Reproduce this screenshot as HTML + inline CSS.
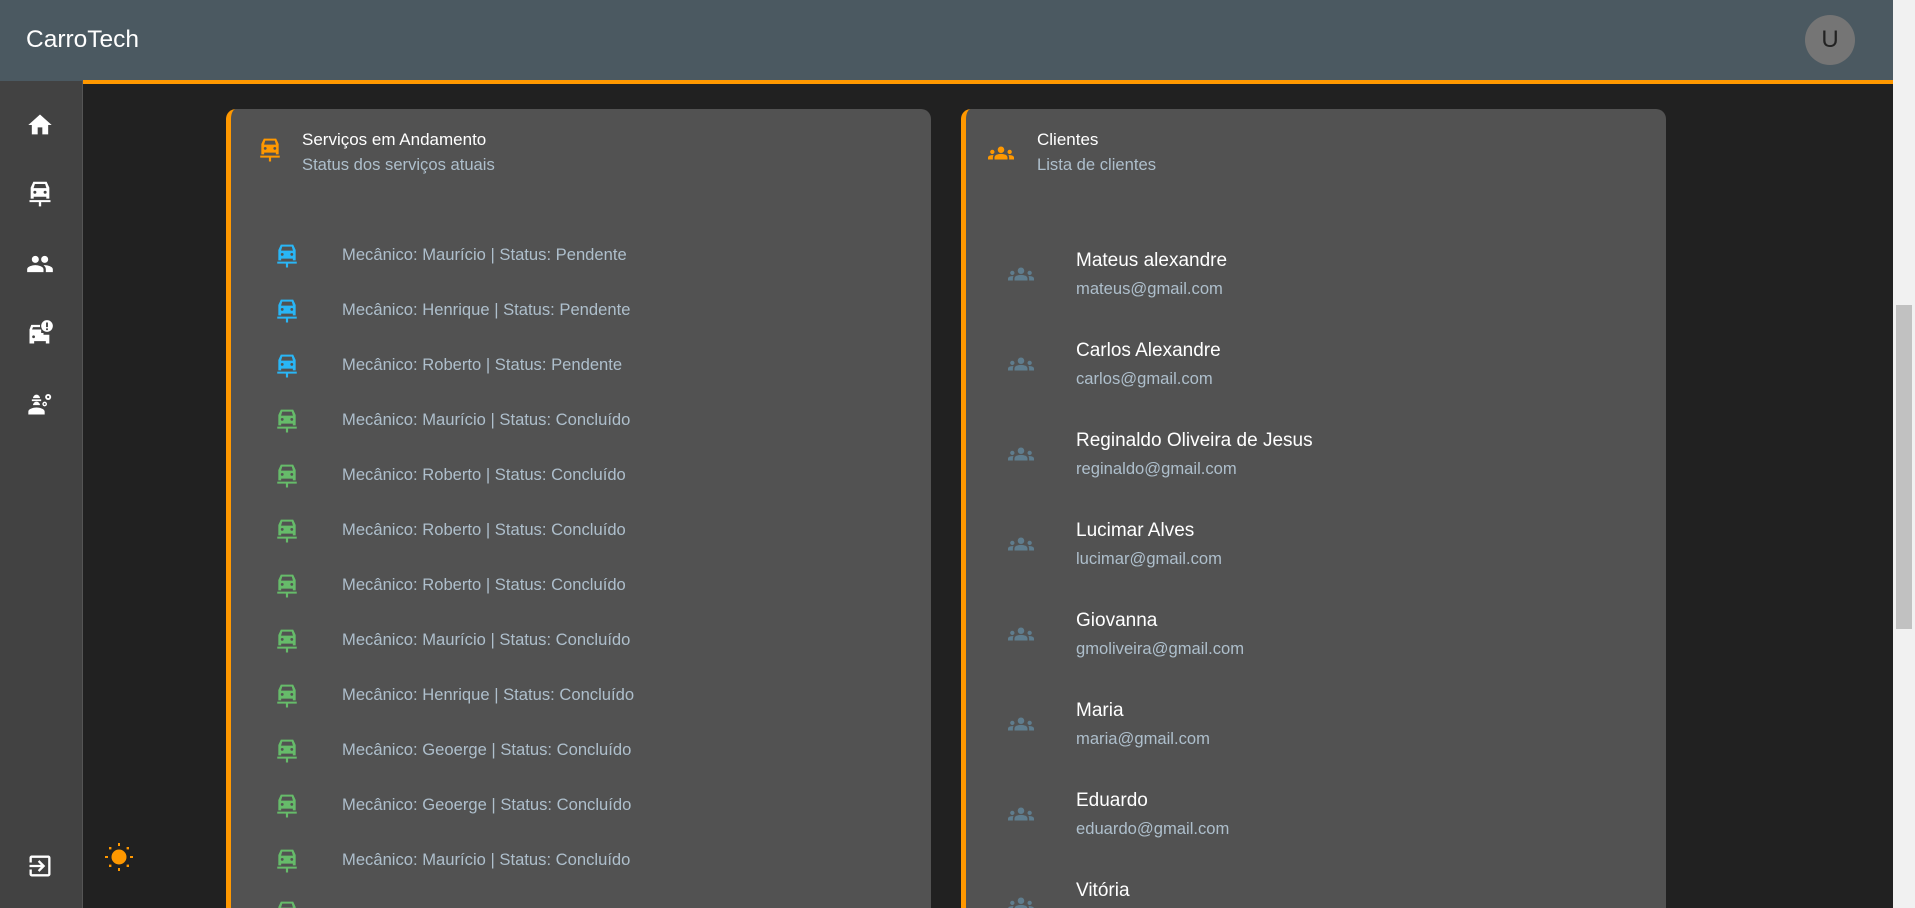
<!DOCTYPE html>
<html><head><meta charset="utf-8"><style>
*{margin:0;padding:0;box-sizing:border-box}
html,body{width:1915px;height:908px;overflow:hidden}
body{background:#212121;font-family:"Liberation Sans",sans-serif;position:relative}
.hdr{position:absolute;left:0;top:0;width:1893px;height:81px;background:#4b5961}
.hdr .t{position:absolute;left:26px;top:26px;font-size:24.5px;color:#fff}
.av{position:absolute;left:1805px;top:15px;width:50px;height:50px;border-radius:50%;background:#757575;color:#222;font-size:24px;text-align:center;line-height:50px}
.side{position:absolute;left:0;top:81px;width:83px;height:827px;background:#424242;border-right:1px solid #555}
.side svg{position:absolute;left:26px;width:28px;height:28px;fill:#fff}
.ol{position:absolute;left:83px;top:80px;width:1810px;height:4px;background:#ff9800}
.sb{position:absolute;left:1893px;top:0;width:22px;height:908px;background:#f1f1f1}
.sb div{position:absolute;left:3px;top:305px;width:16px;height:324px;background:#c1c1c1}
.card{position:absolute;top:109px;width:705px;height:799px;background:#525252;border-radius:10px 10px 0 0;border-left:5px solid #ff9800}
.ic{position:absolute;width:26px;height:26px}
.ct{position:absolute;font-size:17px;color:#fff}
.cs{position:absolute;font-size:16.6px;color:#aebfcc}
.it{position:absolute;font-size:16.6px;color:#aebfcc}
.nm{position:absolute;font-size:19px;color:#fff}
.em{position:absolute;font-size:16.6px;color:#aebfcc}
</style></head><body>
<svg width="0" height="0" style="position:absolute"><defs>
<symbol id="car" viewBox="0 0 24 24"><path d="M6.3 1.5h11.4L20 6.5V16h-2.6v-1.6H6.6V16H4V6.5zM7.6 3.4L6.5 7h11l-1.1-3.6zM7.6 9.2a1.3 1.3 0 100 2.6 1.3 1.3 0 000-2.6zm8.8 0a1.3 1.3 0 100 2.6 1.3 1.3 0 000-2.6zM3 17.2h18v1.8h-8v3.6h-2V19H3z"/></symbol>
<symbol id="grp" viewBox="0 0 24 24"><path d="M12 12.75c1.63 0 3.07.39 4.24.9 1.08.48 1.76 1.56 1.76 2.73V18H6v-1.61c0-1.18.68-2.26 1.76-2.73 1.17-.52 2.61-.91 4.24-.91zM4 13c1.1 0 2-.9 2-2s-.9-2-2-2-2 .9-2 2 .9 2 2 2zm1.13 1.1c-.37-.06-.74-.1-1.13-.1-.99 0-1.93.21-2.78.58C.48 14.9 0 15.62 0 16.43V18h4.5v-1.61c0-.83.23-1.61.63-2.29zM20 13c1.1 0 2-.9 2-2s-.9-2-2-2-2 .9-2 2 .9 2 2 2zm4 3.43c0-.81-.48-1.530-1.22-1.85-.85-.37-1.79-.58-2.78-.58-.39 0-.76.04-1.13.1.4.68.63 1.46.63 2.29V18H24v-1.57zM12 6c1.66 0 3 1.34 3 3s-1.34 3-3 3-3-1.34-3-3 1.34-3 3-3z"/></symbol>
</defs></svg>
<div class="hdr"><div class="t">CarroTech</div><div class="av">U</div></div>
<div class="side">
<svg style="top:30px" viewBox="0 0 24 24"><path d="M10 20v-6h4v6h5v-8h3L12 3 2 12h3v8z"/></svg>
<svg style="top:99px" viewBox="0 0 24 24"><use href="#car"/></svg>
<svg style="top:169px" viewBox="0 0 24 24"><path d="M16 11c1.66 0 2.99-1.34 2.99-3S17.66 5 16 5c-1.66 0-3 1.34-3 3s1.34 3 3 3zm-8 0c1.66 0 2.99-1.34 2.99-3S9.66 5 8 5C6.34 5 5 6.34 5 8s1.34 3 3 3zm0 2c-2.33 0-7 1.17-7 3.5V19h14v-2.5c0-2.33-4.67-3.5-7-3.5zm8 0c-.29 0-.62.02-.97.05 1.16.84 1.97 1.97 1.97 3.45V19h6v-2.5c0-2.33-4.670-3.5-7-3.5z"/></svg>
<svg style="top:238px" viewBox="0 0 24 24"><path d="M3 9l1.5-4H12v2H6l-.8 2H13v3H3zM3 12h12v1.5h5V21h-3v-2H7v2H3zM6.5 14a1.2 1.2 0 100 2.4 1.2 1.2 0 000-2.4z"/><circle cx="18" cy="6" r="5"/><path d="M17.2 3h1.6v4h-1.6zM17.2 8h1.6v1.5h-1.6z" fill="#424242"/></svg>
<svg style="top:309px" viewBox="0 0 24 24"><path d="M5 8h8v1.5H5zM6 7a3 3 0 016 0zM9 10a3 3 0 013 3H6a3 3 0 013-3zM9 15c-3 0-7 1.3-7 3.5V21h14v-2.5C16 16.3 12 15 9 15z"/><circle cx="19" cy="6" r="2.6"/><circle cx="19" cy="6" r="1" fill="#424242"/><circle cx="16" cy="12" r="2"/><circle cx="16" cy="12" r=".8" fill="#424242"/></svg>
<svg style="top:771px" viewBox="0 0 24 24"><path d="M10.09 15.59L11.5 17l5-5-5-5-1.41 1.41L12.67 11H3v2h9.67l-2.58 2.59zM19 3H5c-1.11 0-2 .9-2 2v4h2V5h14v14H5v-4H3v4c0 1.1.89 2 2 2h14c1.1 0 2-.9 2-2V5c0-1.1-.9-2-2-2z"/></svg>
</div>
<div class="ol"></div>
<svg style="position:absolute;left:105px;top:843px" width="28" height="28" viewBox="0 0 28 28" fill="#ff9800"><circle cx="14" cy="14" r="7.5"/><rect x="13" y="0" width="2" height="3"/><rect x="13" y="25" width="2" height="3"/><rect x="0" y="13" width="3" height="2"/><rect x="25" y="13" width="3" height="2"/><rect x="4" y="4" width="2.4" height="2.4"/><rect x="21.6" y="4" width="2.4" height="2.4"/><rect x="4" y="21.6" width="2.4" height="2.4"/><rect x="21.6" y="21.6" width="2.4" height="2.4"/></svg>

<div class="card" style="left:226px">
<svg class="ic" style="left:26px;top:28px;fill:#ff9800" viewBox="0 0 24 24"><use href="#car"/></svg>
<div class="ct" style="left:71px;top:21px">Serviços em Andamento</div>
<div class="cs" style="left:71px;top:46px">Status dos serviços atuais</div>
</div>
<div class="card" style="left:961px">
<svg class="ic" style="left:22px;top:31px;fill:#ff9800" viewBox="0 0 24 24"><use href="#grp"/></svg>
<div class="ct" style="left:71px;top:21px">Clientes</div>
<div class="cs" style="left:71px;top:46px">Lista de clientes</div>
</div>

<div>
<svg class="ic" style="left:274px;top:243px;fill:#29b6f6" viewBox="0 0 24 24"><use href="#car"/></svg><div class="it" style="left:342px;top:245px">Mecânico: Maurício | Status: Pendente</div>
<svg class="ic" style="left:274px;top:298px;fill:#29b6f6" viewBox="0 0 24 24"><use href="#car"/></svg><div class="it" style="left:342px;top:300px">Mecânico: Henrique | Status: Pendente</div>
<svg class="ic" style="left:274px;top:353px;fill:#29b6f6" viewBox="0 0 24 24"><use href="#car"/></svg><div class="it" style="left:342px;top:355px">Mecânico: Roberto | Status: Pendente</div>
<svg class="ic" style="left:274px;top:408px;fill:#66bb6a" viewBox="0 0 24 24"><use href="#car"/></svg><div class="it" style="left:342px;top:410px">Mecânico: Maurício | Status: Concluído</div>
<svg class="ic" style="left:274px;top:463px;fill:#66bb6a" viewBox="0 0 24 24"><use href="#car"/></svg><div class="it" style="left:342px;top:465px">Mecânico: Roberto | Status: Concluído</div>
<svg class="ic" style="left:274px;top:518px;fill:#66bb6a" viewBox="0 0 24 24"><use href="#car"/></svg><div class="it" style="left:342px;top:520px">Mecânico: Roberto | Status: Concluído</div>
<svg class="ic" style="left:274px;top:573px;fill:#66bb6a" viewBox="0 0 24 24"><use href="#car"/></svg><div class="it" style="left:342px;top:575px">Mecânico: Roberto | Status: Concluído</div>
<svg class="ic" style="left:274px;top:628px;fill:#66bb6a" viewBox="0 0 24 24"><use href="#car"/></svg><div class="it" style="left:342px;top:630px">Mecânico: Maurício | Status: Concluído</div>
<svg class="ic" style="left:274px;top:683px;fill:#66bb6a" viewBox="0 0 24 24"><use href="#car"/></svg><div class="it" style="left:342px;top:685px">Mecânico: Henrique | Status: Concluído</div>
<svg class="ic" style="left:274px;top:738px;fill:#66bb6a" viewBox="0 0 24 24"><use href="#car"/></svg><div class="it" style="left:342px;top:740px">Mecânico: Geoerge | Status: Concluído</div>
<svg class="ic" style="left:274px;top:793px;fill:#66bb6a" viewBox="0 0 24 24"><use href="#car"/></svg><div class="it" style="left:342px;top:795px">Mecânico: Geoerge | Status: Concluído</div>
<svg class="ic" style="left:274px;top:848px;fill:#66bb6a" viewBox="0 0 24 24"><use href="#car"/></svg><div class="it" style="left:342px;top:850px">Mecânico: Maurício | Status: Concluído</div>
<svg class="ic" style="left:274px;top:900px;fill:#66bb6a" viewBox="0 0 24 24"><use href="#car"/></svg>
</div>
<div>
<svg class="ic" style="left:1008px;top:261px;fill:#5f7d8e" viewBox="0 0 24 24"><use href="#grp"/></svg><div class="nm" style="left:1076px;top:250px">Mateus alexandre</div><div class="em" style="left:1076px;top:279px">mateus@gmail.com</div>
<svg class="ic" style="left:1008px;top:351px;fill:#5f7d8e" viewBox="0 0 24 24"><use href="#grp"/></svg><div class="nm" style="left:1076px;top:340px">Carlos Alexandre</div><div class="em" style="left:1076px;top:369px">carlos@gmail.com</div>
<svg class="ic" style="left:1008px;top:441px;fill:#5f7d8e" viewBox="0 0 24 24"><use href="#grp"/></svg><div class="nm" style="left:1076px;top:430px">Reginaldo Oliveira de Jesus</div><div class="em" style="left:1076px;top:459px">reginaldo@gmail.com</div>
<svg class="ic" style="left:1008px;top:531px;fill:#5f7d8e" viewBox="0 0 24 24"><use href="#grp"/></svg><div class="nm" style="left:1076px;top:520px">Lucimar Alves</div><div class="em" style="left:1076px;top:549px">lucimar@gmail.com</div>
<svg class="ic" style="left:1008px;top:621px;fill:#5f7d8e" viewBox="0 0 24 24"><use href="#grp"/></svg><div class="nm" style="left:1076px;top:610px">Giovanna</div><div class="em" style="left:1076px;top:639px">gmoliveira@gmail.com</div>
<svg class="ic" style="left:1008px;top:711px;fill:#5f7d8e" viewBox="0 0 24 24"><use href="#grp"/></svg><div class="nm" style="left:1076px;top:700px">Maria</div><div class="em" style="left:1076px;top:729px">maria@gmail.com</div>
<svg class="ic" style="left:1008px;top:801px;fill:#5f7d8e" viewBox="0 0 24 24"><use href="#grp"/></svg><div class="nm" style="left:1076px;top:790px">Eduardo</div><div class="em" style="left:1076px;top:819px">eduardo@gmail.com</div>
<svg class="ic" style="left:1008px;top:891px;fill:#5f7d8e" viewBox="0 0 24 24"><use href="#grp"/></svg><div class="nm" style="left:1076px;top:880px">Vitória</div>
</div>
<div class="sb"><div></div></div>
</body></html>
